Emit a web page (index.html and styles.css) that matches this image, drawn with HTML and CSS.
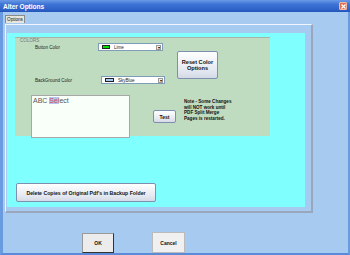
FILE: index.html
```html
<!DOCTYPE html>
<html>
<head>
<meta charset="utf-8">
<link rel="stylesheet" href="styles.css">
</head>
<body>
<div class="window">
  <div class="titlebar">
    <span class="title">Alter Options</span>
    <span class="close">
      <svg width="5" height="5" viewBox="0 0 5 5"><path d="M0.5 0.5L4.5 4.5M4.5 0.5L0.5 4.5" stroke="#fff" stroke-width="1.2"/></svg>
    </span>
  </div>
  <div class="body">
    <div class="tab">Options</div>
    <div class="tabpage">
      <div class="cyan">
        <div class="group">
          <div class="legend">COLORS</div>
          <div class="top">
            <div class="colorcol">
              <div class="crow r1">
                <span class="lbl l1">Button Color</span>
                <span class="select s1"><span class="sw lime"></span><span class="opt">Lime</span><span class="arrow">▾</span></span>
              </div>
              <div class="crow r2">
                <span class="lbl l2">BackGround Color</span>
                <span class="select s2"><span class="sw sky"></span><span class="opt">SkyBlue</span><span class="arrow">▾</span></span>
              </div>
            </div>
            <div class="btn reset">Reset Color<br>Options</div>
          </div>
          <div class="bottom">
            <div class="textbox">ABC <span class="hl">Sel</span>ect</div>
            <div class="btn test">Test</div>
            <div class="note">Note - Some Changes<br>will NOT work until<br>PDF Split Merge<br>Pages is restarted.</div>
          </div>
        </div>
        <div class="btn delete">Delete Copies of Original Pdf's in Backup Folder</div>
      </div>
    </div>
    <div class="footer">
      <div class="fbtn ok">OK</div>
      <div class="fbtn cancel">Cancel</div>
    </div>
  </div>
</div>
</body>
</html>
```
FILE: styles.css
```css
html, body {
  margin: 0;
  padding: 0;
}
body {
  width: 350px;
  height: 255px;
  overflow: hidden;
  font-family: "Liberation Sans", Arial, sans-serif;
  background: #a6caf0;
}
.window {
  width: 350px;
  height: 255px;
  display: flex;
  flex-direction: column;
}
.titlebar {
  height: 12px;
  flex: none;
  box-sizing: border-box;
  background: linear-gradient(#6a9ae6 0%, #3f74d6 35%, #2f62c8 80%, #2456b8 100%);
  display: flex;
  align-items: center;
  justify-content: space-between;
  padding: 0 3px 0 3px;
}
.title {
  color: #fff;
  font-weight: bold;
  font-size: 6.6px;
  letter-spacing: -0.05px;
  line-height: 7px;
  margin-top: 0px;
}
.close {
  width: 8px;
  height: 8px;
  box-sizing: border-box;
  background: #e2704e;
  border: 1px solid #f4b6a0;
  border-radius: 1px;
  display: flex;
  align-items: center;
  justify-content: center;
}
.body {
  flex: 1;
  box-sizing: border-box;
  border-left: 3px solid #6a9ae0;
  border-right: 2px solid #6a9ae0;
  border-bottom: 2px solid #5b8ad8;
  background: #a6caf0;
  display: flex;
  flex-direction: column;
}
.tab {
  margin: 3px 0 0 2px;
  width: 20px;
  height: 8px;
  box-sizing: border-box;
  background: #e6e6df;
  border: 1px solid #8a8a8a;
  border-bottom: none;
  font-size: 4.6px;
  line-height: 7px;
  text-align: center;
  color: #111;
}
.tabpage {
  margin: 1px 0 0 2px;
  width: 308px;
  height: 189px;
  box-sizing: border-box;
  border-top: 1px solid #f0f6ff;
  border-left: 1px solid #f0f6ff;
  border-right: 2px solid #9aa6bc;
  border-bottom: 2px solid #9aa6bc;
  padding: 8px 0 0 1px;
}
.cyan {
  width: 298px;
  height: 174px;
  box-sizing: border-box;
  background: #80ffff;
  padding: 4px 0 0 8px;
  display: flex;
  flex-direction: column;
}
.group {
  width: 255px;
  height: 99px;
  box-sizing: border-box;
  background: #c0dcc0;
  border-top: 1px solid #a8b4a8;
  padding: 0 0 0 16px;
  position: relative;
}
.legend {
  font-size: 4.6px;
  line-height: 5px;
  color: #777;
  margin-left: -11px;
}
.top {
  display: flex;
  align-items: flex-start;
}
.colorcol {
  width: 134px;
}
.crow {
  display: flex;
  align-items: center;
  height: 8px;
}
.r2 {
  margin-top: 25px;
}
.lbl {
  font-size: 4.5px;
  color: #222;
  margin-left: 4px;
}
.l1 { width: 63px; }
.l2 { width: 66px; }
.select {
  height: 8px;
  box-sizing: border-box;
  background: #fff;
  border: 1px solid #7f9db9;
  display: flex;
  align-items: center;
  padding-left: 3px;
}
.s1 { width: 65px; }
.s2 { width: 64px; }
.sw {
  width: 8px;
  height: 4px;
  box-sizing: border-box;
  border: 1px solid #222;
  flex: none;
}
.lime { background: #00e000; }
.sky { background: #a8c8f0; width: 9px; }
.opt {
  font-size: 4.5px;
  color: #222;
  margin-left: 4px;
  flex: 1;
}
.arrow {
  width: 5px;
  height: 5px;
  box-sizing: border-box;
  border: 1px solid #999;
  background: #eee;
  font-size: 4px;
  line-height: 3px;
  text-align: center;
  margin-right: 1px;
  color: #000;
}
.btn {
  box-sizing: border-box;
  background: linear-gradient(#ffffff, #e4e8f0 70%, #d4dae6);
  border: 1px solid #7f8fb0;
  border-radius: 2px;
  font-weight: bold;
  color: #111;
  display: flex;
  align-items: center;
  justify-content: center;
  text-align: center;
}
.reset {
  width: 41px;
  height: 28px;
  margin: 8px 0 0 12px;
  font-size: 5.6px;
  line-height: 6.2px;
}
.bottom {
  display: flex;
  align-items: flex-start;
  margin-top: 11px;
}
.textbox {
  width: 99px;
  height: 43px;
  box-sizing: border-box;
  background: #f9fff9;
  border: 1px solid #a8a8a8;
  padding: 1px 0 0 1px;
  font-size: 7px;
  line-height: 8px;
  color: #555;
}
.hl {
  background: #b4c4ee;
  color: #d04a6a;
}
.test {
  width: 23px;
  height: 13px;
  margin: 15px 0 0 23px;
  font-size: 5px;
}
.note {
  margin: 4px 0 0 8px;
  font-size: 4.6px;
  line-height: 5.7px;
  font-weight: bold;
  color: #111;
  white-space: nowrap;
}
.delete {
  width: 140px;
  height: 19px;
  margin: 47px 0 0 1px;
  font-size: 5.2px;
  white-space: nowrap;
}
.footer {
  display: flex;
  align-items: flex-start;
  margin-top: 19px;
  padding-left: 79px;
}
.fbtn {
  box-sizing: border-box;
  background: #ececec;
  border: 1px solid #555;
  border-right-color: #333;
  border-bottom-color: #333;
  border-top-color: #999;
  border-left-color: #999;
  font-weight: bold;
  font-size: 5px;
  color: #111;
  display: flex;
  align-items: center;
  justify-content: center;
}
.ok {
  width: 32px;
  height: 20px;
  margin-top: 1px;
}
.cancel {
  width: 33px;
  height: 21px;
  margin-left: 38px;
  background: #f0f0f0;
  border-color: #bbb;
}
```
